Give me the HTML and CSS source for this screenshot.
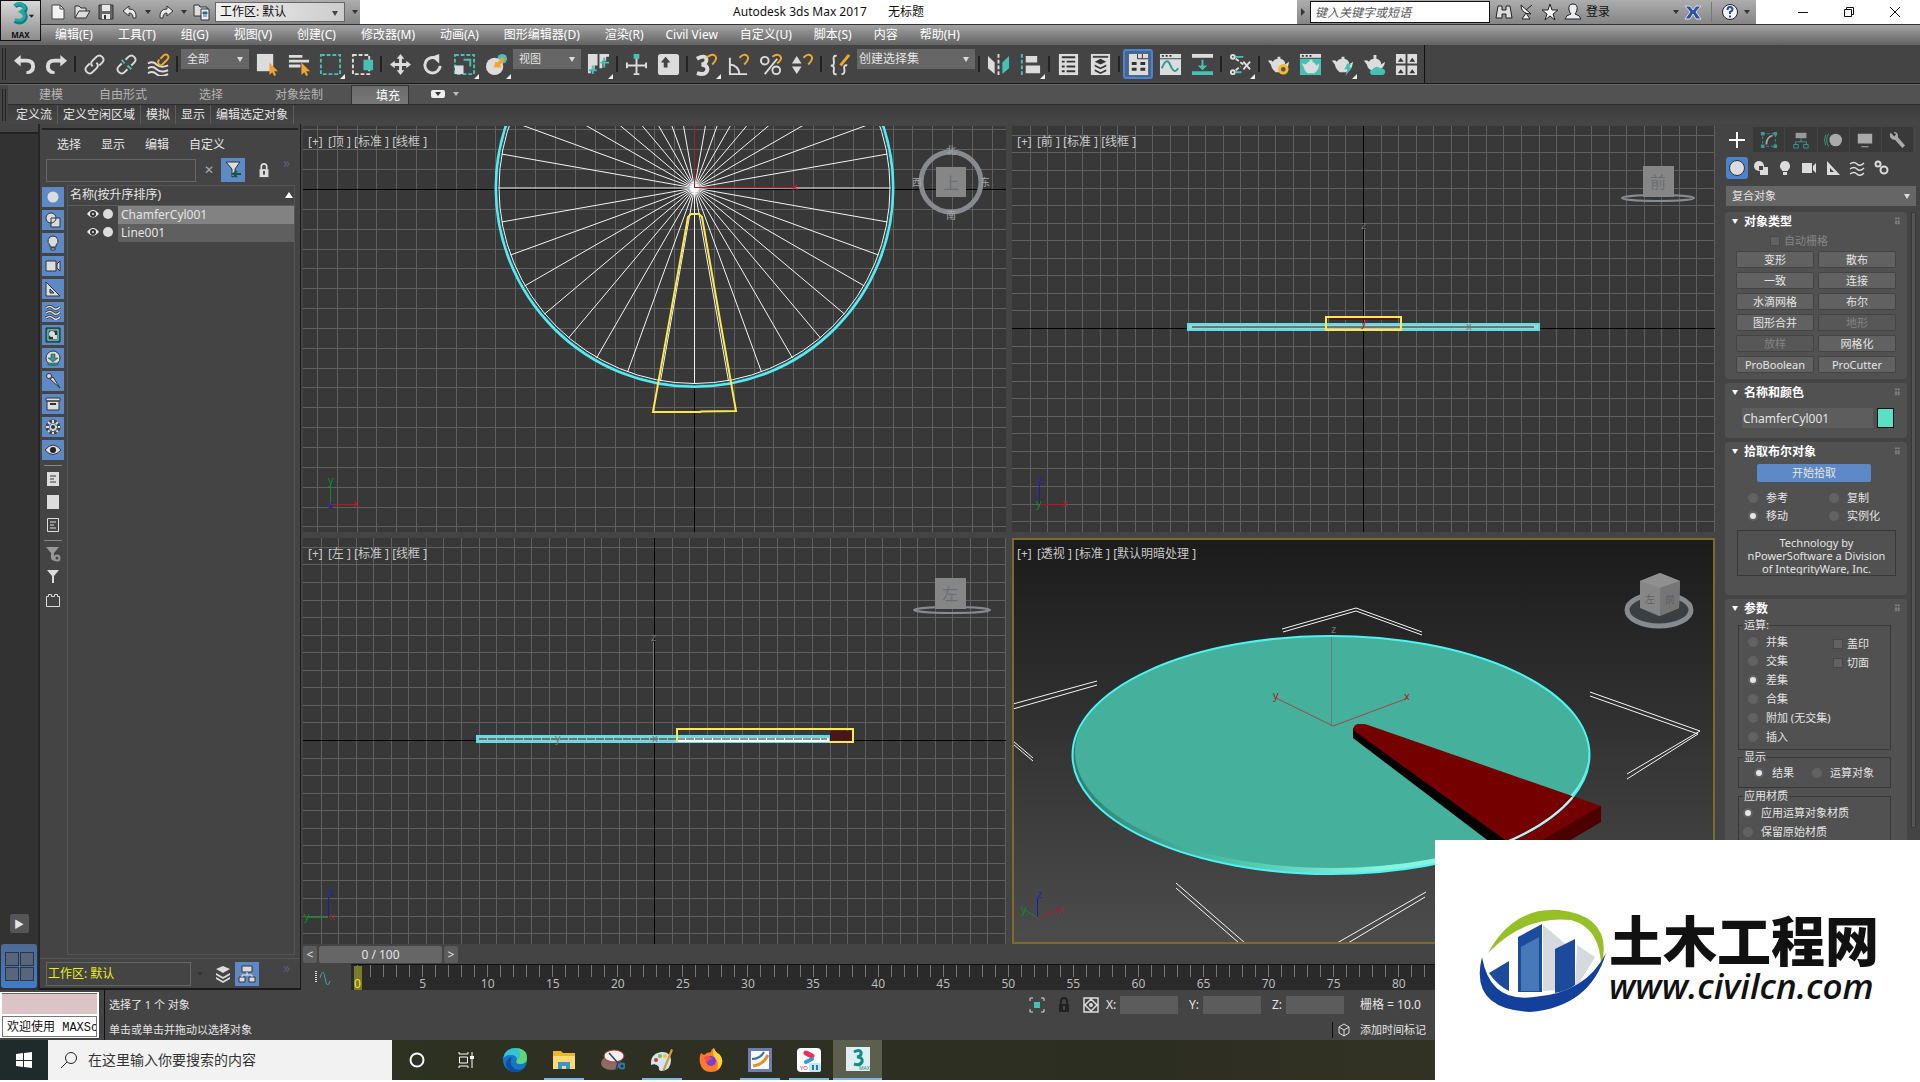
FILE: index.html
```html
<!DOCTYPE html>
<html lang="zh-CN">
<head>
  <meta charset="utf-8">
  <title>Autodesk 3ds Max 2017</title>
  <link rel="stylesheet" href="styles.css">
</head>
<body>

  <!-- Title bar and menus -->
  <header class="top">
    <button class="logo" type="button" aria-label="3ds Max">
      <svg width="38" height="38" viewBox="0 0 38 38">
        <path d="M11 7q6-5 12 0q4 4-1 8q5 4 1 10q-5 5-12 1" fill="none" stroke="#0d7f80" stroke-width="6"/>
        <path d="M11 6q6-5 11 0q4 4-3 8q7 3 3 9q-4 4-11 1" fill="none" stroke="#23a9a5" stroke-width="4"/>
        <path d="M29 18h7l-3 4z" fill="#222"/>
      </svg>
      <b>MAX</b>
    </button>
    <div class="top-rows">
      <div class="titlebar">
        <div class="quick">
          <button type="button" aria-label="新建"><svg class="s18" viewBox="0 0 18 18"><path d="M3 2h8l4 4v10H3z" fill="#f2f2f2" stroke="#444"/><path d="M11 2v4h4" fill="none" stroke="#444"/></svg></button>
          <button type="button" aria-label="打开"><svg class="s18" viewBox="0 0 18 18"><path d="M2 15V3h4l2 2h5v3M2 15l4-7h11l-4 7z" fill="#ddd" stroke="#333"/></svg></button>
          <button type="button" aria-label="保存"><svg class="s18" viewBox="0 0 18 18"><path d="M2 2h14v14H2z" fill="#666" stroke="#333"/><path d="M5 2h8v6H5zM5 11h8v5H5z" fill="#e8e8e8"/><path d="M7 12h2v4H7z" fill="#333"/></svg></button>
          <button type="button" aria-label="撤消"><svg class="s18" viewBox="0 0 18 18"><path d="M2 8l6-5v3q8 0 7 9h-3q0-5-4-5v3z" fill="#e8e8e8" stroke="#333"/></svg></button>
          <i class="down"></i>
          <button type="button" aria-label="重做"><svg class="s18" viewBox="0 0 18 18"><path d="M16 8l-6-5v3q-8 0-7 9h3q0-5 4-5v3z" fill="#e8e8e8" stroke="#333"/></svg></button>
          <i class="down"></i>
          <button type="button" aria-label="项目文件夹"><svg class="s18" viewBox="0 0 18 18"><path d="M1 2h5l1 2h7v9H1z" fill="#ddd" stroke="#333"/><path d="M8 6h8v11H8z" fill="#eee" stroke="#333"/><path d="M10 9h4v2h-4zM10 13h4" stroke="#2a6a9a" fill="#2a6a9a"/></svg></button>
          <span class="pick pick-light"><select aria-label="工作区"><option>工作区: 默认</option></select></span>
          <i class="down down-bar"></i>
        </div>
        <h1 class="title">Autodesk 3ds Max 2017 <span>无标题</span></h1>
        <div class="info">
          <i class="right"></i>
          <input type="text" placeholder="键入关键字或短语" aria-label="搜索">
          <button type="button" aria-label="查找"><svg class="s18" viewBox="0 0 18 18"><path d="M3 3h4v4h4V3h4l2 12h-6v-4H7v4H1z" fill="#ddd" stroke="#222"/></svg></button>
          <button type="button" aria-label="通讯中心"><svg class="s18" viewBox="0 0 18 18"><path d="M3 2q0 9 10 9zM8 10l4 6H4z" fill="#eee" stroke="#222"/><path d="M8 7l6-5" stroke="#222"/></svg></button>
          <button type="button" aria-label="收藏夹"><svg class="s18" viewBox="0 0 18 18"><path d="M9 1l2 6h6l-5 4 2 6-5-4-5 4 2-6-5-4h6z" fill="#f4f4f4" stroke="#222"/></svg></button>
          <button type="button" class="login"><svg class="s18" viewBox="0 0 18 18"><path d="M9 1q5 0 4 6-1 3-2 4 5 1 6 5H1q1-4 6-5-1-1-2-4-1-6 4-6z" fill="#e8eef4" stroke="#222"/></svg>登录</button>
          <i class="down push"></i>
          <button type="button" aria-label="Exchange"><svg class="s18" viewBox="0 0 18 18"><path d="M1 3h5l3 4 3-4h5l-5 6 5 7h-5l-3-5-3 5H1l5-7z" fill="#2d52a0" stroke="#dde"/></svg></button>
          <span class="bar"></span>
          <button type="button" aria-label="帮助"><svg class="s18" viewBox="0 0 18 18"><circle cx="9" cy="9" r="7.500" fill="#f4f6fa" stroke="#222"/><path d="M6.500 7q0-3 2.500-3t2.500 2.500q0 1.500-2.500 2.500v2M9 12.500v2" fill="none" stroke="#1f4fa0" stroke-width="2"/></svg></button>
          <i class="down"></i>
        </div>
        <div class="win">
          <button type="button" aria-label="最小化"><svg width="14" height="14" viewBox="0 0 14 14"><path d="M2 7.500h10"/></svg></button>
          <button type="button" aria-label="还原"><svg width="14" height="14" viewBox="0 0 14 14"><path d="M2.500 4.500h7v7h-7zM4.500 4.500v-2h7v7h-2"/></svg></button>
          <button type="button" aria-label="关闭"><svg width="14" height="14" viewBox="0 0 14 14"><path d="M2 2l10 10M12 2L2 12"/></svg></button>
        </div>
      </div>
      <nav class="menubar">
        <a href="#">编辑(E)</a><a href="#">工具(T)</a><a href="#">组(G)</a><a href="#">视图(V)</a><a href="#">创建(C)</a><a href="#">修改器(M)</a><a href="#">动画(A)</a><a href="#">图形编辑器(D)</a><a href="#">渲染(R)</a><a href="#">Civil View</a><a href="#">自定义(U)</a><a href="#">脚本(S)</a><a href="#">内容</a><a href="#">帮助(H)</a>
      </nav>
    </div>
  </header>

  <!-- Main toolbar -->
  <div class="toolbar">
    <div class="tools">
      <span class="grip"></span>
      <button type="button" aria-label="撤消"><svg viewBox="0 0 24 24"><path d="M1 8l7-6v4h6q9 0 9 8t-9 8v-3q5-1 5-5t-5-4H8v4z"/></svg></button>
      <button type="button" aria-label="重做"><svg viewBox="0 0 24 24"><path d="M23 8l-7-6v4h-6q-9 0-9 8t9 8v-3q-5-1-5-5t5-4h6v4z"/></svg></button>
      <i class="sep"></i>
      <button type="button" aria-label="链接"><svg viewBox="0 0 24 24"><g class="line"><path d="M10 14q-3-3 0-6l4-4q3-3 6 0t0 6l-3 3"/><path d="M14 10q3 3 0 6l-4 4q-3 3-6 0t0-6l3-3"/></g></svg></button>
      <button type="button" aria-label="取消链接"><svg viewBox="0 0 24 24"><g class="line"><path d="M11 7l3-3q3-3 6 0t0 6l-3 3M13 17l-3 3q-3 3-6 0t0-6l3-3"/><path class="tl" d="M7 7l3 4M17 17l-4-4"/></g></svg></button>
      <button type="button" aria-label="绑定到空间扭曲"><svg viewBox="0 0 24 24"><g class="line"><path d="M1 11q5-3 9 1t12 1M1 16q5-3 9 1t12 1M1 21q5-3 9 1t12 0"/><path class="ol" d="M14 6l4-4q3-1 4 1t-1 4l-5 5q-3 2-4-1t1-4"/></g></svg></button>
      <i class="sep"></i>
      <span class="pick pick-s"><select aria-label="选择过滤器"><option>全部</option></select></span>
      <button type="button" aria-label="选择对象"><svg viewBox="0 0 24 24"><path d="M2 1h17v18H2z"/><path class="o" d="M15 10v13l3-3 2 4 2-1-2-4h4z"/></svg></button>
      <button type="button" aria-label="按名称选择"><svg viewBox="0 0 24 24"><path d="M2 2h14v3H2zM2 7h21v3H2zM2 12h12v3H2z"/><path class="o" d="M15 10v13l3-3 2 4 2-1-2-4h4z"/></svg></button>
      <button type="button" class="fly" aria-label="矩形选择区域"><svg viewBox="0 0 24 24"><path class="tl dash" d="M2 2h20v20H2z"/></svg></button>
      <button type="button" aria-label="窗口/交叉"><svg viewBox="0 0 24 24"><path class="wl dash" d="M2 2h17v20H2z"/><path class="t" d="M13 7h10v11H13z"/></svg></button>
      <i class="sep"></i>
      <button type="button" aria-label="选择并移动"><svg viewBox="0 0 24 24"><path d="M12 1l4 5h-2.500v4.500H18V8l5 4-5 4v-2.500h-4.500V18H16l-4 5-4-5h2.500v-4.500H6V16l-5-4 5-4v2.500h4.500V6H8z"/></svg></button>
      <button type="button" aria-label="选择并旋转"><svg viewBox="0 0 24 24"><path class="wl mid" d="M17 6.500a8 8 0 1 0 3 7"/><path d="M11 4l8-3v10z"/></svg></button>
      <button type="button" class="fly" aria-label="选择并缩放"><svg viewBox="0 0 24 24"><path class="tl dash" d="M2 2h20v20H2z"/><path d="M2 13h9v9H2z"/><path class="tl" d="M11 7h7v7M18 7"/></svg></button>
      <button type="button" class="fly" aria-label="选择并放置"><svg viewBox="0 0 24 24"><circle class="t" cx="18" cy="6" r="5"/><circle cx="10" cy="14" r="9"/><path class="o" d="M9 15l2-6 2 1 5-6 3 3-5 5 1 3z"/></svg></button>
      <span class="pick pick-s"><select aria-label="参考坐标系"><option>视图</option></select></span>
      <button type="button" class="fly" aria-label="使用轴点中心"><svg viewBox="0 0 24 24"><path d="M1 1h10v12h-3v4H4v4H1zM13 1h10v3h-3v4h-4v8h-3z"/><path class="tl" d="M6 13v9M2 18h8M18 5v10M14 10h9"/></svg></button>
      <i class="sep"></i>
      <button type="button" aria-label="选择并操纵"><svg viewBox="0 0 24 24"><path class="wl" d="M12 5v18M2 13h20M2 10v6M22 10v6M9 22h6"/><path class="t" d="M9 1h6v5H9z"/></svg></button>
      <button type="button" aria-label="键盘快捷键"><svg viewBox="0 0 24 24"><rect x="1" y="1" width="22" height="22" rx="3"/><path d="M9 4l5 6h-3v5H7v-5H4z" fill="#444"/></svg></button>
      <i class="sep"></i>
      <button type="button" class="fly" aria-label="捕捉开关"><svg viewBox="0 0 24 24"><path class="wl thick" d="M2 6q9-5 10 1 0 4-5 5 6 1 6 5-1 7-11 4"/><path class="ol" d="M12 5q6-5 9-2t-3 9"/></svg></button>
      <button type="button" aria-label="角度捕捉"><svg viewBox="0 0 24 24"><path class="wl" d="M3 5v17h18M3 12q9 1 10 10"/><path class="ol" d="M13 5q5-5 8-2t-3 9"/></svg></button>
      <button type="button" aria-label="百分比捕捉"><svg viewBox="0 0 24 24"><g class="line"><circle cx="6" cy="8" r="4"/><circle cx="18" cy="18" r="4"/><path d="M19 6L6 22"/></g><path class="ol" d="M14 4q5-4 8-1t-3 8"/></svg></button>
      <button type="button" aria-label="微调器捕捉"><svg viewBox="0 0 24 24"><path d="M1 11l5-8 5 8zM1 14h10l-5 8z"/><path class="ol" d="M13 5q5-5 8-2t-3 9"/></svg></button>
      <i class="sep"></i>
      <button type="button" aria-label="编辑命名选择集"><svg viewBox="0 0 24 24"><path class="wl" d="M8 3Q4 2 5 8t-3 5q4 0 3 5t3 4M13 22q4 0 3-5t3-4"/><path class="ol mid" d="M12 13l9-11"/></svg></button>
      <span class="pick pick-l"><select aria-label="命名选择集"><option>创建选择集</option></select></span>
      <i class="sep"></i>
      <button type="button" aria-label="镜像"><svg viewBox="0 0 24 24"><path d="M1 3l7 7v12l-7-6z"/><path class="t" d="M23 3l-7 7v12l7-6z"/><path class="wl dash" d="M12 1v22"/></svg></button>
      <button type="button" class="fly" aria-label="对齐"><svg viewBox="0 0 24 24"><path class="tl dash" d="M3 1v22"/><path d="M7 3h12v7H7zM7 13h15v8H7z"/></svg></button>
      <i class="sep"></i>
      <button type="button" aria-label="层资源管理器"><svg viewBox="0 0 24 24"><path d="M2 1h20v22H2z"/><path d="M5 4.500h14M5 9h3M10 9h9M5 14h3M10 14h9M5 19h3M10 19h9" stroke="#333" stroke-width="2"/></svg></button>
      <button type="button" aria-label="场景资源管理器"><svg viewBox="0 0 24 24"><path d="M2 1h20v22H2z"/><path d="M4 4h16" stroke="#444" stroke-width="2"/><path d="M12 6l6 3-6 3-6-3zM6 12l6 3 6-3v2l-6 3-6-3zM6 17l6 3 6-3v2l-6 3-6-3z" fill="#333"/></svg></button>
      <i class="sep"></i>
      <button type="button" class="on" aria-label="切换功能区"><svg viewBox="0 0 24 24"><path d="M2 1h20v22H2z"/><path d="M11 1v5h11M16 1v5" fill="none" stroke="#333"/><path d="M5 11h5M5 17h5M14 11h5M14 17h5" stroke="#333" stroke-width="3"/></svg></button>
      <button type="button" aria-label="曲线编辑器"><svg viewBox="0 0 24 24"><path d="M1 1h22v22H1z"/><path d="M3 3h2M7 3h2M11 3h2" stroke="#333" stroke-width="2"/><path d="M1 6h22" stroke="#444"/><path d="M3 16q5-13 9-3t8 3" fill="none" stroke="#2a9c93" stroke-width="2"/></svg></button>
      <button type="button" aria-label="图解视图"><svg viewBox="0 0 24 24"><path d="M1 1h22v4H1z"/><path class="t" d="M11 7h2v6h4l-5 5-5-5h4zM1 19h22v4H1z"/></svg></button>
      <i class="sep"></i>
      <button type="button" class="fly" aria-label="材质编辑器"><svg viewBox="0 0 24 24"><path class="tl" d="M7 4h8M7 20h6"/><g class="line"><circle cx="4" cy="4" r="2"/><circle cx="4" cy="20" r="2"/></g><path class="wl dash" d="M7 6l8 6M7 18l5-4"/><path class="wl" d="M15 9l7 8M22 9l-7 8"/></svg></button>
      <i class="sep"></i>
      <button type="button" aria-label="渲染设置"><svg viewBox="0 0 24 24"><path d="M1 8q3-1 5 1 2-3 5-3V4h3v2q5 1 5 6l4-3q-1 9-7 11H9Q5 17 4 12z"/><circle cx="17" cy="17" r="4" fill="#555" stroke="#f5b82e" stroke-width="3"/></svg></button>
      <button type="button" aria-label="渲染帧窗口"><svg viewBox="0 0 24 24"><path d="M1 1h22v4H1z"/><path class="t" d="M1 6h22v17H1z"/><path d="M3 3h2M7 3h2M11 3h2" stroke="#333" stroke-width="2"/><path d="M3 11q2 0 4 1 2-3 4-3V7h3v2q3 1 4 4l3-2q0 7-5 10H9q-3-2-4-6z"/></svg></button>
      <button type="button" class="fly" aria-label="渲染产品"><svg viewBox="0 0 24 24"><path d="M1 8q3-1 5 1 2-3 5-3V4h3v2q5 1 5 6l4-3q-1 9-7 11H9Q5 17 4 12z"/><path class="t" d="M17 11l-3 6h3l-2 7 7-9h-3l2-4z"/></svg></button>
      <button type="button" aria-label="云渲染"><svg viewBox="0 0 24 24"><path d="M1 8q3-1 5 1 2-3 5-3V2h3v4q5 1 5 6l4-3q-1 7-7 9H9Q5 17 4 12z"/><path class="t" d="M9 23q-4-4 1-6 4-5 8-1 6 0 5 5l-2 2z"/></svg></button>
      <button type="button" aria-label="Autodesk A360 库"><svg viewBox="0 0 24 24"><path d="M1 1h10v10H1zM13 1h10v10H13zM1 13h10v10H1zM13 13h10v10H13z"/><path d="M3 9l3-4 3 4zM15 9l3-4 3 4zM3 21l3-4 3 4zM15 21l3-4 3 4z" fill="#333"/></svg></button>
    </div>
  </div>

  <!-- Ribbon -->
  <div class="ribbon">
    <span class="grip"></span>
    <div class="ribbon-rows">
      <div class="tabs">
        <button type="button" class="tab tight">建模</button>
        <button type="button" class="tab">自由形式</button>
        <button type="button" class="tab">选择</button>
        <button type="button" class="tab">对象绘制</button>
        <button type="button" class="tab tight active">填充</button>
        <button type="button" class="mini" aria-label="最小化功能区"><i class="down"></i></button>
        <i class="down"></i>
      </div>
      <div class="panels">
        <button type="button">定义流</button>
        <button type="button">定义空闲区域</button>
        <button type="button">模拟</button>
        <button type="button">显示</button>
        <button type="button">编辑选定对象</button>
      </div>
    </div>
  </div>

  <main class="work">
    <aside class="strip">
      <span class="strip-grip"></span>
      <button type="button" class="play" aria-label="展开">▶</button>
      <button type="button" class="layout" aria-label="视口布局"><i></i><i></i><i></i><i></i></button>
    </aside>

    <!-- Scene explorer -->
    <section class="explorer">
      <nav class="ex-menu"><a href="#">选择</a><a href="#">显示</a><a href="#">编辑</a><a href="#">自定义</a></nav>
      <div class="ex-search">
        <input type="text" aria-label="查找">
        <button type="button" class="clear" aria-label="清除">✕</button>
        <button type="button" class="blue" aria-label="过滤"><svg class="s18" viewBox="0 0 18 18"><path d="M2 1h14l-5 7v7l-3 1V8z" fill="#ddd" stroke="#333"/><path d="M10 13h7M13 10l-4 3 4 3" fill="none" stroke="#154" stroke-width="2"/></svg></button>
        <button type="button" class="lock" aria-label="锁定"><svg class="s16" viewBox="0 0 18 18"><path d="M6 8V5q0-3 3-3t3 3v3" fill="none" stroke="#ddd" stroke-width="2"/><path d="M4 8h10v9H4z" fill="#ddd"/><path d="M9 10v4" stroke="#333" stroke-width="2"/></svg></button>
        <span class="more">»</span>
      </div>
      <div class="ex-body">
        <div class="ex-icons">
          <button type="button" class="blue" aria-label="几何体"><svg class="s16" viewBox="0 0 16 16"><circle cx="8" cy="8" r="5.500"/></svg></button>
          <button type="button" class="blue" aria-label="图形"><svg class="s16" viewBox="0 0 16 16"><circle cx="6" cy="6" r="5" stroke="#333"/><path d="M6 6h9v9H6z" stroke="#333"/><path d="M6 11a5 5 0 0 0 5-5" fill="none" stroke="#333"/></svg></button>
          <button type="button" class="blue" aria-label="灯光"><svg class="s16" viewBox="0 0 16 16"><path d="M8 1a5 5 0 0 1 3 9v2H5v-2a5 5 0 0 1 3-9zM6 13h4v2H6z" stroke="#333"/></svg></button>
          <button type="button" class="blue" aria-label="摄影机"><svg class="s16" viewBox="0 0 16 16"><path d="M1 3h10v10H1zM12 6l3-3v10l-3-3z" stroke="#333"/></svg></button>
          <button type="button" class="blue" aria-label="辅助对象"><svg class="s16" viewBox="0 0 16 16"><path d="M1 1l14 14H1zM5 8v4h4z" fill-rule="evenodd" stroke="#333"/></svg></button>
          <button type="button" class="blue" aria-label="空间扭曲"><svg class="s16" viewBox="0 0 16 16"><path d="M1 4q4-3 7 0t7-1M1 9q4-3 7 0t7-1M1 14q4-3 7 0t7-1" fill="none" stroke="#333" stroke-width="3"/><path d="M1 4q4-3 7 0t7-1M1 9q4-3 7 0t7-1M1 14q4-3 7 0t7-1" fill="none" stroke="#ddd" stroke-width="1.500"/></svg></button>
          <button type="button" class="blue" aria-label="组"><svg class="s16" viewBox="0 0 16 16"><path d="M1 1h14v14H1z" fill="#2c7d74" stroke="#222"/><path d="M3 3h10v10H3z" fill="#333" stroke="#7fe0d0"/><circle cx="7" cy="7" r="3"/><path d="M8 8h4v4H8z"/></svg></button>
          <button type="button" class="blue" aria-label="外部参考"><svg class="s16" viewBox="0 0 16 16"><circle cx="8" cy="8" r="7" stroke="#333"/><path d="M6 4h4v4h3l-5 4-5-4h3zM3 13h10v2H3z" fill="#2c9c8c" stroke="#333" stroke-width=".5"/></svg></button>
          <button type="button" class="blue" aria-label="骨骼"><svg class="s16" viewBox="0 0 16 16"><path d="M5 6l3-2 7 11z" stroke="#333"/><circle cx="4" cy="3" r="2.500" stroke="#333"/></svg></button>
          <button type="button" class="blue" aria-label="容器"><svg class="s16" viewBox="0 0 16 16"><path d="M1 2h14v3H1zM2 5h12v9H2z" stroke="#333"/><path d="M5 8h6" stroke="#333" stroke-width="2"/></svg></button>
          <button type="button" class="blue" aria-label="冻结"><svg class="s16" viewBox="0 0 16 16"><circle cx="8" cy="8" r="6" fill="none" stroke="#444" stroke-width="3"/><path d="M8 1v14M1 8h14M3 3l10 10M13 3L3 13" stroke="#ddd" stroke-width="2" stroke-dasharray="3 1"/><circle cx="8" cy="8" r="2" fill="#333"/></svg></button>
          <button type="button" class="blue" aria-label="隐藏"><svg class="s16" viewBox="0 0 16 16"><path d="M0 8q8-10 16 0-8 9-16 0z" stroke="#333"/><circle cx="8" cy="8" r="3" fill="#222"/></svg></button>
          <hr>
          <button type="button" aria-label="全部显示"><svg class="s16" viewBox="0 0 16 16"><path d="M2 1h12v14H2z"/><path d="M5 5h6M5 8h4M5 11h6" stroke="#333"/></svg></button>
          <button type="button" aria-label="不显示"><svg class="s16" viewBox="0 0 16 16"><path d="M2 1h12v14H2z"/></svg></button>
          <button type="button" aria-label="反转显示"><svg class="s16" viewBox="0 0 16 16"><path d="M2.500 1.500h11v13h-11zM5 5h6M5 8h4M5 11h6" fill="none" stroke="#ddd"/></svg></button>
          <hr>
          <button type="button" aria-label="过滤设置"><svg class="s16" viewBox="0 0 16 16"><path d="M1 1h13L9 7v8l-3-2V7z" fill="#999"/><circle cx="12" cy="12" r="2.500" fill="none" stroke="#999" stroke-width="2"/></svg></button>
          <button type="button" aria-label="过滤器"><svg class="s16" viewBox="0 0 16 16"><path d="M2 1h12L9 7v7H7V7z"/></svg></button>
          <button type="button" aria-label="容器"><svg class="s16" viewBox="0 0 16 16"><path d="M1.500 4.500h2v-2h3v2h3v-2h3v2h2v10h-13z" fill="none" stroke="#ddd"/></svg></button>
        </div>
        <div class="ex-list">
          <div class="ex-head"><span>名称(按升序排序)</span><i class="up"></i></div>
          <div class="ex-row sel">
            <svg width="36" height="16" viewBox="0 0 36 16"><path d="M1 8q6-8 12 0-6 7-12 0z" fill="#eee"/><circle cx="7" cy="8" r="3" fill="#333"/><circle cx="7" cy="8" r="1" fill="#eee"/><circle cx="22" cy="8" r="5" fill="#ddd"/></svg><span>ChamferCyl001</span>
          </div>
          <div class="ex-row">
            <svg width="36" height="16" viewBox="0 0 36 16"><path d="M1 8q6-8 12 0-6 7-12 0z" fill="#eee"/><circle cx="7" cy="8" r="3" fill="#333"/><circle cx="7" cy="8" r="1" fill="#eee"/><circle cx="22" cy="8" r="5" fill="#ddd"/></svg><span>Line001</span>
          </div>
        </div>
      </div>
      <div class="ex-foot">
        <select aria-label="工作区"><option>工作区: 默认</option></select>
        <i class="down"></i>
        <button type="button" aria-label="按层"><svg class="s18" viewBox="0 0 18 18"><path d="M9 1l7 3-7 4-7-4zM2 8l7 4 7-4v2l-7 4-7-4zM2 12l7 4 7-4v2l-7 4-7-4z"/></svg></button>
        <button type="button" class="blue" aria-label="按层次"><svg class="s18" viewBox="0 0 18 18"><path d="M4 1h10v6H4zM1 12h6v5H1zM11 12h6v5h-6z" stroke="#333"/><path d="M9 7v3M4 12v-2h10v2" fill="none" stroke="#eee"/></svg></button>
        <span class="more">»</span>
      </div>
    </section>

    <!-- Viewports -->
    <section class="center">
      <div class="views">
        <div class="view">
          <svg class="scene" viewBox="0 0 703 406" preserveAspectRatio="xMidYMid slice">
            <path class="grid" data-step="19.85" data-x="391" data-y="63"/>
            <path class="axis" d="M0 63.500h703M391.500 0v406"/>
            <g transform="translate(391.5 62)">
              <path class="wire" d="M-196 0H196M-193-34L193 34M-184-67L184 67M-170-98L170 98M-150-126L150 126M-126-150L126 150M-98-170L98 170M-67-184L67 184M-34-193L34 193M0-196V196M34-193L-34 193M67-184L-67 184M98-170L-98 170M126-150L-126 150M150-126L-150 126M170-98L-170 98M184-67L-184 67M193-34L-193 34"/>
              <circle r="195.500" class="wire"/>
              <circle r="198.500" fill="none" stroke="#55eaf2" stroke-width="3"/>
              <circle r="197" fill="none" stroke="#2d5558"/>
              <circle r="4" fill="#fff"/>
            </g>
            <path d="M391.500 62V0M391.500 61.500h100" stroke="#b01c24"/>
            <text class="ax r" x="489" y="64">x</text>
            <path class="yellow" d="M350 286l35-195 3-3h8l3 3 34 194-35 .5-.5.5z"/>
            <g class="cube">
              <circle cx="648" cy="56" r="30" fill="none" stroke="#868b90" stroke-width="5"/>
              <path d="M633 41h30v30h-30z"/>
              <text x="648" y="63" class="face">上</text>
              <text x="648" y="28">北</text><text x="648" y="93">南</text><text x="614" y="60">西</text><text x="682" y="60">东</text>
            </g>
            <path d="M27.500 378v-20" stroke="#0a8a2a"/><path d="M27 378.500h27" stroke="#b01c24"/>
            <text class="ax g" x="25" y="358">y</text><text class="ax b" x="25" y="382">z</text><text class="ax r" x="50" y="381">x</text>
          </svg>
          <p><span>[+]</span> [顶 ] [标准 ] [线框 ]</p>
        </div>
        <div class="view">
          <svg class="scene" viewBox="0 0 703 406" preserveAspectRatio="xMidYMid slice">
            <path class="grid" data-step="17.55" data-x="351" data-y="202"/>
            <path class="axis" d="M0 202.500h703M351.500 0v406"/>
            <path d="M352.500 104v96" stroke="#777"/>
            <path d="M176 198h351v6H176z" fill="#b9c9c9" stroke="#4ee6ec" stroke-width="2"/>
            <path d="M180 201h342" stroke="#222"/>
            <path class="yellow" d="M314 191h75v13h-75z"/>
            <path d="M318 193h67" stroke="#5a1414" stroke-width="2"/>
            <text class="ax" x="349" y="103">z</text><text class="ax r" x="349" y="200">y</text><text class="ax" x="454" y="204">x</text>
            <g class="cube">
              <ellipse cx="646" cy="72" rx="36" ry="3" fill="none" stroke="#868b90" stroke-width="2"/>
              <path d="M631 40h31v31h-31z"/><text x="646" y="62" class="face">前</text>
            </g>
            <path d="M27.500 378v-20" stroke="#1a1ac0"/><path d="M27 378.500h27" stroke="#b01c24"/>
            <text class="ax b" x="25" y="358">z</text><text class="ax g" x="24" y="381">y</text><text class="ax r" x="50" y="381">x</text>
          </svg>
          <p><span>[+]</span> [前 ] [标准 ] [线框 ]</p>
        </div>
        <div class="view">
          <svg class="scene" viewBox="0 0 703 406" preserveAspectRatio="xMidYMid slice">
            <path class="grid" data-step="17.55" data-x="351" data-y="202"/>
            <path class="axis" d="M0 202.500h703M351.500 0v406"/>
            <path d="M350.500 104v96" stroke="#777"/>
            <path d="M527 193h22v10h-22z" fill="#4a1616"/>
            <path d="M174 198h352v6H174z" fill="#a5c5c5" stroke="#4ee6ec" stroke-width="2"/>
            <path d="M374 200h152v4H374z" fill="#fff"/>
            <path d="M176 201h348" stroke="#222" stroke-dasharray="8 1"/>
            <path class="yellow" d="M526 204h24v-13H374v13"/>
            <text class="ax" x="348" y="103">z</text><text class="ax" x="252" y="204">y</text><text class="ax" x="349" y="204">x</text>
            <g class="cube">
              <ellipse cx="649" cy="72" rx="38" ry="3" fill="none" stroke="#868b90" stroke-width="2"/>
              <path d="M632 40h31v31h-31z"/><text x="647" y="62" class="face">左</text>
            </g>
            <path d="M25.500 379v-20" stroke="#1a1ac0"/><path d="M4 379.500h21" stroke="#0a8a2a"/>
            <text class="ax b" x="25" y="358">z</text><text class="ax g" x="1" y="382">y</text><text class="ax r" x="26" y="382">x</text>
          </svg>
          <p><span>[+]</span> [左 ] [标准 ] [线框 ]</p>
        </div>
        <div class="view persp">
          <svg class="scene" viewBox="0 0 703 406" preserveAspectRatio="xMidYMid slice">
            <defs>
              <linearGradient id="rim"><stop offset="0" stop-color="#2f7f70"/><stop offset=".3" stop-color="#4cc0aa"/><stop offset=".6" stop-color="#86f5e0"/></linearGradient>
            </defs>
            <path class="wire" d="M270 91l74-21 66 24M271 94l73-21 66 24M1 166l84-23M1 171l84-24M1 203l20 17M1 206l20 17M578 154l110 39-73 43M578 158l108 38-71 45M164 345l69 60M164 350l63 55M414 354l-89 51M413 359l-77 46"/>
            <ellipse cx="319" cy="217" rx="258" ry="119" fill="url(#rim)"/>
            <ellipse cx="320" cy="214" rx="257" ry="116" fill="#45b09c"/>
            <path d="M319.500 98v90" stroke="#5f7f78"/>
            <path d="M264 160l57 28 75-28" fill="none" stroke="#a04840"/>
            <text class="ax r" x="261" y="161">y</text><text class="ax r" x="392" y="162">x</text><text class="ax" x="319" y="95">z</text>
            <path d="M341 190v10l150 114h36z" fill="#050000"/>
            <path d="M341 192q1-6 5-6h7l236 82-64 44h-18z" fill="#740000"/>
            <path d="M589 268v16l-56 33-20-5z" fill="#4c0000"/>
            <ellipse cx="319" cy="217" rx="258.500" ry="119" fill="none" stroke="#4df3f3" stroke-width="2"/>
            <path d="M560 260A258.500 119 0 0 1 487 307" fill="none" stroke="#b5f3f5" stroke-width="2"/>
            <g class="cube">
              <ellipse cx="647" cy="72" rx="32" ry="16" fill="#3c3f42" stroke="#868b90" stroke-width="5"/>
              <path d="M648 35l20 8-1 27-20 8-19-8V43z"/>
              <path d="M648 35l20 8-20 7-20-7z" fill="#8f8f8f"/>
              <path d="M648 50v28l19-8 1-27z" fill="#757575"/>
              <text x="638" y="65">左</text><text x="658" y="65">前</text>
            </g>
            <path d="M25.500 380v-20" stroke="#1a1ac0"/><path d="M26 380l24-9" stroke="#b01c24"/><path d="M26 380l-13-8" stroke="#0a8a2a"/>
            <text class="ax b" x="25" y="360">z</text><text class="ax g" x="9" y="375">y</text><text class="ax r" x="46" y="375">x</text>
          </svg>
          <p><span>[+]</span> [透视 ] [标准 ] [默认明暗处理 ]</p>
        </div>
      </div>
      <div class="slider">
        <button type="button">&lt;</button>
        <button type="button" class="frame">0 / 100</button>
        <button type="button">&gt;</button>
      </div>
      <div class="track">
        <button type="button" aria-label="打开迷你曲线编辑器"><svg width="18" height="16" viewBox="0 0 18 16"><path d="M2 2v12" stroke="#ddd" stroke-width="2" stroke-dasharray="1 1"/><path d="M6 9q3-12 5 0t5 3" fill="none" stroke="#3aa9a0"/></svg></button>
        <div class="ruler" id="ruler"></div>
      </div>
    </section>

    <!-- Command panel -->
    <aside class="command">
      <div class="cmd-tabs">
        <button type="button" class="active" aria-label="创建"><svg class="s20" viewBox="0 0 20 20"><path d="M9 2h2v7h7v2h-7v7H9v-7H2V9h7z" fill="#fff"/></svg></button>
        <button type="button" aria-label="修改"><svg class="s18" viewBox="0 0 20 20"><path d="M3 3h14v14H3z" fill="none" stroke="#3a9a90" stroke-dasharray="3 2"/><path d="M1 1h4v4H1zM15 1h4v4h-4zM1 15h4v4H1zM15 15h4v4h-4z" fill="#3a9a90"/><path d="M7 15q0-8 7-10" fill="none" stroke="#aaa" stroke-width="2"/></svg></button>
        <button type="button" aria-label="层次"><svg class="s18" viewBox="0 0 20 20"><path d="M4 2h12v6H4z" fill="#999"/><path d="M10 8v4M4 15v-3h12v3M2 15h5v4H2zM13 15h5v4h-5z" fill="none" stroke="#3a9a90"/></svg></button>
        <button type="button" aria-label="运动"><svg class="s18" viewBox="0 0 20 20"><path d="M5 3q-4 7 0 14M2 4q-3 6 0 12" fill="none" stroke="#3a9a90"/><circle cx="13" cy="10" r="7" fill="#aaa"/></svg></button>
        <button type="button" aria-label="显示"><svg class="s18" viewBox="0 0 20 20"><path d="M2 3h16v11H2zM6 17h8v1H6z" fill="#aaa"/></svg></button>
        <button type="button" aria-label="实用程序"><svg class="s18" viewBox="0 0 20 20"><path d="M3 2l4 4 2-2-3-3q6 0 5 6l8 9-3 3-8-9q-6 0-6-6z" fill="#aaa"/></svg></button>
      </div>
      <div class="cats">
        <button type="button" class="on" aria-label="几何体"><svg class="s18" viewBox="0 0 18 18"><circle cx="9" cy="9" r="7.500" stroke="#333"/></svg></button>
        <button type="button" aria-label="图形"><svg class="s16" viewBox="0 0 16 16"><circle cx="6" cy="6" r="5"/><path d="M7 7h8v8H7z"/><path d="M6 6h4v4H6z" fill="#444"/></svg></button>
        <button type="button" aria-label="灯光"><svg class="s16" viewBox="0 0 16 16"><path d="M8 1a5 5 0 0 1 3 9v1H5v-1a5 5 0 0 1 3-9zM6 12h4v3H6z"/></svg></button>
        <button type="button" aria-label="摄影机"><svg class="s16" viewBox="0 0 16 16"><path d="M1 3h10v10H1zM12 6l3-3v10l-3-3z"/></svg></button>
        <button type="button" aria-label="辅助对象"><svg class="s16" viewBox="0 0 16 16"><path d="M2 1l13 14H2zM5 8v4h4z" fill-rule="evenodd"/></svg></button>
        <button type="button" aria-label="空间扭曲"><svg class="s16" viewBox="0 0 16 16"><path d="M1 4q4-3 7 0t7-1M1 9q4-3 7 0t7-1M1 14q4-3 7 0t7-1" fill="none" stroke="#ddd" stroke-width="1.500"/></svg></button>
        <button type="button" aria-label="系统"><svg class="s16" viewBox="0 0 16 16"><g fill="none" stroke="#ddd" stroke-width="2"><circle cx="5" cy="4" r="2.500"/><circle cx="11" cy="10" r="3.500"/></g></svg></button>
      </div>
      <span class="pick pick-cmd"><select aria-label="对象类别"><option>复合对象</option></select></span>
      <div class="scroll">
        <div class="rolls">
          <section class="roll">
            <h2>对象类型</h2>
            <label class="autogrid"><input type="checkbox" disabled>自动栅格</label>
            <div class="types">
              <button type="button">变形</button><button type="button">散布</button>
              <button type="button">一致</button><button type="button">连接</button>
              <button type="button">水滴网格</button><button type="button">布尔</button>
              <button type="button">图形合并</button><button type="button" disabled>地形</button>
              <button type="button" disabled>放样</button><button type="button">网格化</button>
              <button type="button">ProBoolean</button><button type="button">ProCutter</button>
            </div>
          </section>
          <section class="roll">
            <h2>名称和颜色</h2>
            <div class="namecolor">
              <input type="text" value="ChamferCyl001" aria-label="名称">
              <button type="button" class="swatch" aria-label="颜色"></button>
            </div>
          </section>
          <section class="roll pickroll">
            <h2>拾取布尔对象</h2>
            <button type="button" class="start">开始拾取</button>
            <div class="modes">
              <label><input type="radio" name="mode">参考</label><label><input type="radio" name="mode">复制</label>
              <label><input type="radio" name="mode" checked>移动</label><label><input type="radio" name="mode">实例化</label>
            </div>
            <div class="credit">Technology by<br>nPowerSoftware a Division<br>of IntegrityWare, Inc.</div>
          </section>
          <section class="roll params">
            <h2>参数</h2>
            <fieldset class="ops">
              <legend>运算:</legend>
              <div>
                <label><input type="radio" name="op">并集</label>
                <label><input type="radio" name="op">交集</label>
                <label><input type="radio" name="op" checked>差集</label>
                <label><input type="radio" name="op">合集</label>
                <label><input type="radio" name="op">附加 (无交集)</label>
                <label><input type="radio" name="op">插入</label>
              </div>
              <div class="checks">
                <label><input type="checkbox">盖印</label>
                <label><input type="checkbox">切面</label>
              </div>
            </fieldset>
            <fieldset class="show">
              <legend>显示</legend>
              <label><input type="radio" name="show" checked>结果</label>
              <label><input type="radio" name="show">运算对象</label>
            </fieldset>
            <fieldset class="mat">
              <legend>应用材质</legend>
              <label><input type="radio" name="mat" checked>应用运算对象材质</label>
              <label><input type="radio" name="mat">保留原始材质</label>
            </fieldset>
          </section>
        </div>
        <span class="bar-v"></span>
      </div>
    </aside>
  </main>

  <!-- Status bar -->
  <div class="status">
    <div class="listener"><span></span><input type="text" value="欢迎使用 MAXScript" aria-label="MAXScript 侦听器"></div>
    <div class="msg"><p>选择了 1 个 对象</p><p>单击或单击并拖动以选择对象</p></div>
    <div class="coords">
      <div class="xyz">
        <svg class="s16" viewBox="0 0 16 16"><path d="M1 4V1h3M12 1h3v3M15 12v3h-3M4 15H1v-3" fill="none" stroke="#ddd"/><path d="M5 5h6v6H5z" fill="#45c0b5"/></svg>
        <svg class="s16" viewBox="0 0 16 16"><path d="M5 7V4q0-3 3-3t3 3v3" fill="none" stroke="#222" stroke-width="2"/><path d="M3 7h10v8H3z" fill="#222"/><path d="M8 9v4" stroke="#777"/></svg>
        <svg class="s16" viewBox="0 0 16 16"><path d="M1 1h14v14H1zM8 2l6 6-6 6-6-6z" fill="none" stroke="#ddd" stroke-width="1.500"/><circle cx="8" cy="8" r="2"/></svg>
        <label>X:<input type="text"></label>
        <label>Y:<input type="text"></label>
        <label>Z:<input type="text"></label>
        <span class="gridsize">栅格 = 10.0</span>
      </div>
      <div class="tag"><svg class="s16" viewBox="0 0 16 16"><path d="M8 2l5 3v6l-5 3-5-3V5zM3 5l5 3 5-3M8 8v6" fill="none" stroke="#ddd"/></svg><span>添加时间标记</span></div>
    </div>
  </div>

  <!-- Windows taskbar -->
  <footer class="taskbar">
    <button type="button" class="start-btn" aria-label="开始"><svg class="s16" viewBox="0 0 16 16"><path d="M0 2l7-1v7H0zM8 1l8-1v8H8zM0 9h7v6l-7-1zM8 9h8v7l-8-1z" fill="#fff"/></svg></button>
    <label class="search"><svg class="s18" viewBox="0 0 18 18"><circle cx="11" cy="7" r="5.500" fill="none" stroke="#222"/><path d="M7 11l-6 6" stroke="#222"/></svg><input type="text" placeholder="在这里输入你要搜索的内容"></label>
    <button type="button" aria-label="Cortana"><svg class="s24" viewBox="0 0 24 24"><circle cx="12" cy="12" r="6.500" fill="none" stroke="#fff" stroke-width="2"/></svg></button>
    <button type="button" aria-label="任务视图"><svg class="s24" viewBox="0 0 24 24"><path d="M5 4v2h9V4M5 20v-2h9v2M5.500 9h8v6h-8zM18 4v16" fill="none" stroke="#fff"/><path d="M16 8h4v3h-4z" fill="#fff"/></svg></button>
    <button type="button" aria-label="Edge"><svg class="s24" viewBox="0 0 24 24"><circle cx="12" cy="12" r="12" fill="#1676c4"/><path d="M0 11Q2 0 13 0q11 1 11 10 0 6-8 6-4-1-2-4 0-5-6-5-6 0-8 4z" fill="#35c3d0"/><path d="M15 0q9 2 9 10 0 6-8 6-4-1-2-4 6-4 1-12z" fill="#5fd675"/><path d="M9 9q-4 7 3 12 5 2 9-1-5 5-11 4Q2 21 3 14q2-4 6-5z" fill="#0f4fa0"/></svg></button>
    <button type="button" class="run" aria-label="文件资源管理器"><svg class="s24" viewBox="0 0 24 24"><path d="M1 3h8l2 2h12v16H1z" fill="#f0b429"/><path d="M1 8h22v13H1z" fill="#fddb72"/><path d="M6 21v-7h12v7h-4v-3h-4v3z" fill="#3b92d0"/></svg></button>
    <button type="button" aria-label="截图工具"><svg class="s24" viewBox="0 0 24 24"><ellipse cx="10" cy="15" rx="10" ry="7" fill="#8d6a63"/><ellipse cx="13" cy="8" rx="10" ry="6" fill="#f5f0f0" stroke="#b33"/><path d="M8 5l9 10M17 14l6 3M17 14l-2 8" stroke="#246" stroke-width="1.500"/><circle cx="21" cy="18" r="2.500" fill="none" stroke="#2a7ba0" stroke-width="2"/></svg></button>
    <button type="button" class="run" aria-label="画图"><svg class="s24" viewBox="0 0 24 24"><path d="M1 17Q0 6 11 4q9-1 10 8 0 10-9 11-4 0-3-4-3-4-8-2z" fill="#cfe6f5"/><circle cx="6" cy="12" r="2" fill="#d33"/><circle cx="10" cy="8" r="2" fill="#8b3"/><circle cx="15" cy="8" r="2" fill="#fb3"/><path d="M21 1l2 1-8 20-3 1z" fill="#d99a3c"/></svg></button>
    <button type="button" aria-label="Firefox"><svg class="s24" viewBox="0 0 24 24"><path d="M2 5l3 2q3-3 7-3 0-3 3-4 1 4 5 6 4 4 3 9-2 9-11 9T1 15Q0 9 2 5z" fill="#ff7a2a"/><path d="M15 0q1 4 5 6 4 4 3 9-1 5-5 7 3-8-3-13-2-5 0-9z" fill="#ffd03a"/><circle cx="12" cy="13" r="5" fill="#7a3fd0"/><path d="M5 9q5-2 8 2-4 0-4 3-3-1-4-5z" fill="#ff4a4a"/></svg></button>
    <button type="button" class="run" aria-label="看图"><svg class="s24" viewBox="0 0 24 24"><path d="M0 0h24v24H0z" fill="#6c7db5"/><path d="M3 3h18v18H3z" fill="#fafafa"/><path d="M4 11q8 0 12-7" fill="none" stroke="#356fa8" stroke-width="2"/><path d="M5 18q10-1 15-11" fill="none" stroke="#e0902a" stroke-width="3"/></svg></button>
    <button type="button" class="run" aria-label="有道"><svg class="s24" viewBox="0 0 24 24"><rect width="24" height="24" rx="4" fill="#fff"/><path d="M9 5l6 3" stroke="#e8315b" stroke-width="5" stroke-linecap="round"/><path d="M15 11l-6 3" stroke="#3a9bdc" stroke-width="4" stroke-linecap="round"/><text x="3" y="22" font-size="6" fill="#e8315b">YO</text><rect x="12" y="15" width="12" height="9" rx="2" fill="#bfe6f7"/><path d="M16 17v5M20 17v5" stroke="#2a7ba0" stroke-width="2"/></svg></button>
    <button type="button" class="current" aria-label="3ds Max"><svg class="s24" viewBox="0 0 24 24"><path d="M0 0h24v24H0z" fill="#dfeef0"/><path d="M8 5q5-3 7 0 1 4-4 5 6 0 5 5-2 4-8 2" fill="none" stroke="#118a88" stroke-width="3"/><text x="13" y="23" font-size="5" fill="#118a88">MAX</text></svg></button>
  </footer>

  <div class="badge">
    <svg width="132" height="106" viewBox="0 0 132 106">
      <path d="M11 46Q36 0 82 3q56 6 42 58 0-40-30-48Q48 8 11 46z" fill="#97bf28"/>
      <path d="M66 18l31 26v38l-31 2z" fill="#d6d9de"/><path d="M100 38l18 12-20 33z" fill="#d6d9de"/>
      <path d="M12 66l20-12v30q-12-6-20-18zM41 30l24-13v68h-24zM78 42l20-10v46q-8 6-20 8z" fill="#1d4b9c"/>
      <path d="M44 40l18-10v54H44z" fill="#4778b8"/>
      <path d="M5 50q8 46 52 40 52-4 72-44-16 54-76 59Q-8 102 5 50z" fill="#12409a"/>
    </svg>
    <div class="badge-text"><b>土木工程网</b><em>www.civilcn.com</em></div>
  </div>

  <script src="script.js"></script>
</body>
</html>
```
FILE: styles.css
```css
* {
  box-sizing: border-box;
}

body {
  margin: 0;
  padding-bottom: 2px;
  min-height: 100vh;
  display: flex;
  flex-direction: column;
  position: relative;
  background: #fff;
  color: #e4e4e4;
  font-family: "Noto Sans", "Noto Sans CJK SC", sans-serif;
  font-size: 12px;
  line-height: 16px;
}

button, input, select {
  font: inherit;
  color: inherit;
  margin: 0;
  padding: 0;
  border: 0;
  border-radius: 0;
  background: none;
}

button {
  display: flex;
  align-items: center;
  justify-content: center;
  flex: none;
}

a {
  color: inherit;
  text-decoration: none;
}

p, h1, h2 {
  margin: 0;
  font-size: 12px;
  font-weight: normal;
}

select {
  appearance: none;
  width: 100%;
}

svg {
  display: block;
  flex: none;
  fill: #dcdcdc;
}

.s16 { width: 16px; height: 16px; }
.s18 { width: 18px; height: 18px; }
.s20 { width: 20px; height: 20px; }
.s24 { width: 24px; height: 24px; }

.down {
  width: 0;
  height: 0;
  flex: none;
  border: 3px solid transparent;
  border-top: 4px solid #333;
  border-bottom: 0;
}

.up {
  border: 4px solid transparent;
  border-bottom: 6px solid #fff;
  border-top: 0;
  align-self: center;
  margin-right: 1px;
}

.right {
  width: 0;
  height: 0;
  border: 4px solid transparent;
  border-left-color: #333;
  border-right: 0;
}

.blue {
  background: #5d8ac7;
}

/* title bar + menu */
.top {
  display: flex;
  height: 45px;
}

.logo {
  width: 41px;
  height: 41px;
  flex-direction: column;
  justify-content: flex-start;
  overflow: hidden;
  border: 1px solid #111;
  background: linear-gradient(#d8d8d8, #8c8c8c);
  color: #111;
  box-shadow: 0 4px #666;
}

.logo svg {
  height: 29px;
}

.logo b {
  font-size: 8px;
  line-height: 10px;
}

.top-rows {
  flex: 1;
}

.titlebar {
  display: flex;
  height: 24px;
  background: #fff;
  color: #111;
}

.quick {
  display: flex;
  align-items: center;
  gap: 6px;
  width: 319px;
  padding-left: 8px;
  background: linear-gradient(#adadad, #858585);
}

.title {
  flex: 1;
  text-align: center;
  line-height: 24px;
}

.title span {
  margin-left: 18px;
}

.info {
  display: flex;
  align-items: center;
  gap: 5px;
  width: 459px;
  padding: 0 6px 0 4px;
  background: linear-gradient(#adadad, #858585);
}

.info input {
  width: 180px;
  height: 22px;
  padding-left: 4px;
  border: 1px solid #111;
  background: #fff;
}

.info input::placeholder {
  color: #555;
  font-style: italic;
}

.login {
  gap: 4px;
}

.push {
  margin-left: auto;
}

.bar {
  width: 1px;
  height: 20px;
  margin: 0 4px;
  background: #777;
}

.win {
  display: flex;
  width: 164px;
  padding: 0 2px 0 24px;
}

.win button {
  flex: 1;
}

.win svg {
  fill: none;
  stroke: #111;
}

.menubar {
  display: flex;
  gap: 25px;
  height: 21px;
  padding-left: 14px;
  line-height: 20px;
  background: linear-gradient(#a2a2a2, #636363);
  border-top: 1px solid #333;
  color: #fff;
}

.menubar a:nth-last-child(-n+5) {
  margin-left: -3px;
}

/* drop-downs */
.pick {
  position: relative;
  flex: none;
  height: 20px;
  margin: 0 1px;
  background: #666;
}

.pick::after {
  content: "";
  position: absolute;
  right: 6px;
  top: 8px;
  border: 3px solid transparent;
  border-top: 5px solid #ddd;
  border-bottom: 0;
}

.pick select {
  height: 100%;
  padding-left: 6px;
  display: block;
}

.pick-light {
  width: 130px;
  margin-left: -2px;
  border: 1px solid #666;
  background: linear-gradient(90deg, #f0f0f0, #ccc);
}

.pick-light select {
  padding-left: 4px;
}

.pick-light::after {
  border-top-color: #444;
}

.pick-s { width: 68px; }
.pick-l { width: 118px; }

.pick-s, .pick-l {
  align-self: flex-start;
  margin-top: 4px;
}

.pick-s select, .pick-cmd select {
  font-size: 11px;
}

.pick-l select {
  padding-left: 2px;
}

.pick-cmd {
  display: block;
  width: 190px;
}

/* main toolbar */
.toolbar {
  height: 39px;
  background: #444;
  border-bottom: 1px solid #1c1c1c;
}

.tools {
  display: inline-flex;
  align-items: center;
  height: 38px;
  padding-right: 2px;
  border-right: 1px solid #111;
}

.grip {
  width: 4px;
  height: 32px;
  margin: 0 2px;
  border: 1px solid #222;
  border-width: 0 1px;
  flex: none;
}

.tools button {
  position: relative;
  width: 32px;
  height: 32px;
}

.tools button svg {
  width: 23px;
  height: 23px;
}

.tools .on {
  width: 30px;
  height: 30px;
  margin: 0 1px;
  border: 2px solid #4b83cc;
  border-radius: 3px;
  background: #47648c;
}

.fly::after {
  content: "";
  position: absolute;
  right: 1px;
  bottom: 1px;
  border-left: 5px solid transparent;
  border-bottom: 5px solid #eee;
}

.sep {
  width: 2px;
  height: 16px;
  margin: 0 2px;
  background: #222;
}

.line, .wl { fill: none; stroke: #dcdcdc; stroke-width: 2; }
.t { fill: #45c0b5; }
.tl { fill: none; stroke: #45c0b5; stroke-width: 2; }
.o { fill: #f5a32e; }
.ol { fill: none; stroke: #f0a830; stroke-width: 2; }
.dash { stroke-dasharray: 4 2; }
.mid { stroke-width: 3; }
.thick { stroke-width: 4; }

/* ribbon */
.ribbon {
  display: flex;
  align-items: center;
  height: 40px;
  background: #444;
  border-top: 1px solid #666;
}

.ribbon-rows {
  flex: 1;
}

.tabs {
  display: flex;
  align-items: center;
  gap: 4px;
  height: 20px;
  padding-left: 7px;
  background: #525252;
  border-bottom: 1px solid #2c2c2c;
  color: #b4b4b4;
}

.tab {
  height: 19px;
  padding: 2px 24px 0;
}

.tight {
  padding-right: 8px;
}

.active {
  color: #fff;
}

.tab.active {
  background: linear-gradient(#6b6b6b, #777);
  border: 1px solid #333;
  border-bottom: 0;
}

.mini {
  width: 14px;
  height: 8px;
  margin: 0 4px 0 18px;
  border-radius: 2px;
  background: #eee;
}

.tabs > .down {
  border-top-color: #bbb;
}

.panels {
  display: flex;
  height: 20px;
  padding-left: 3px;
  background: linear-gradient(#3c3c3c, #474747);
}

.panels button {
  padding: 0 5px;
  border-right: 1px solid #5c5c5c;
}

/* workspace */
.work {
  flex: 1;
  display: flex;
  background: #444;
}

.strip {
  width: 40px;
  display: flex;
  flex-direction: column;
  align-items: center;
  gap: 11px;
  padding-bottom: 2px;
  background: #323232;
  border-right: 2px solid #262626;
}

.strip-grip {
  align-self: stretch;
  height: 10px;
  background: #444;
  border-bottom: 2px solid #222;
  margin-bottom: auto;
}

.play {
  width: 19px;
  height: 19px;
  background: #555;
  border-radius: 2px;
  font-size: 10px;
}

.layout {
  width: 36px;
  height: 44px;
  display: grid;
  grid-template-columns: 14px 14px;
  grid-template-rows: 14px 14px;
  gap: 1px;
  align-content: center;
  align-items: stretch;
  background: linear-gradient(#4f6a94, #3f7cca);
  border-radius: 3px;
}

.layout i {
  background: #57667c;
  border: 1px solid #2d3540;
}

/* explorer */
.explorer {
  width: 261px;
  display: flex;
  flex-direction: column;
  border: 1px solid #1a1a1a;
  border-width: 0 1px 2px 0;
}

.ex-menu {
  display: flex;
  gap: 20px;
  margin: 4px 2px 0;
  padding: 7px 0 5px 15px;
  border-top: 2px solid #222;
}

.ex-search {
  display: flex;
  align-items: center;
  height: 24px;
  padding-left: 6px;
}

.ex-search input {
  width: 150px;
  height: 23px;
  border: 1px solid #666;
}

.clear {
  width: 25px;
  color: #aaa;
}

.ex-search .blue, .ex-foot .blue {
  width: 24px;
  height: 24px;
}

.lock {
  width: 38px;
}

.more {
  align-self: flex-start;
  font-size: 14px;
  line-height: 10px;
  color: #5c5c84;
}

.ex-body {
  flex: 1;
  display: flex;
}

.ex-icons {
  display: flex;
  flex-direction: column;
  gap: 3px;
  width: 26px;
  padding: 5px 2px;
}

.ex-icons button {
  height: 20px;
}

.ex-icons hr {
  width: 18px;
  margin: 2px auto 0;
  border: 0;
  border-top: 1px solid #888;
}

.ex-list {
  flex: 1;
  margin: 3px 5px 3px 1px;
  border: 1px solid #555;
}

.ex-head {
  display: flex;
  justify-content: space-between;
  padding: 1px 0 2px 2px;
  border-bottom: 1px solid #5c5c5c;
}

.ex-row {
  display: flex;
  height: 18px;
  padding-left: 18px;
  line-height: 18px;
}

.ex-row span {
  flex: 1;
  margin-left: -4px;
  padding-left: 3px;
  background: #5f5f5f;
}

.ex-row.sel span {
  background: #828282;
}

.ex-foot {
  display: flex;
  align-items: center;
  gap: 6px;
  height: 30px;
  padding-left: 6px;
  border-top: 1px solid #555;
}

.ex-foot select {
  width: 145px;
  height: 24px;
  padding-left: 1px;
  border: 1px solid #666;
  color: #ecec1c;
}

.ex-foot button {
  width: 24px;
  margin-left: 2px;
}

.ex-foot .blue {
  margin-left: -6px;
}

.ex-foot .more {
  margin-left: 18px;
  margin-top: 4px;
}

/* viewports */
.center {
  flex: 1;
  min-width: 0;
  display: flex;
  flex-direction: column;
  padding: 2px 0 0 2px;
}

.views {
  flex: 1;
  display: grid;
  grid-template-columns: 1fr 1fr;
  grid-template-rows: 1fr 1fr;
  gap: 6px;
}

.view {
  position: relative;
  overflow: hidden;
  background: #383838;
}

.view p {
  position: absolute;
  left: 5px;
  top: 8px;
  font-size: 12px;
  color: #c8c8c8;
}

.view p span {
  margin-right: 2px;
}

.scene {
  position: absolute;
  width: 100%;
  height: 100%;
}

.persp {
  background: linear-gradient(#1b1b1b, #4c4c4c);
}

.persp::after {
  content: "";
  position: absolute;
  inset: 0;
  border: 2px solid #7d6a2c;
}

.grid { fill: none; stroke: #606060; }
.axis { stroke: #000; }
.wire { fill: none; stroke: #f4f4f4; }
.yellow { fill: none; stroke: #fbe750; stroke-width: 2; }

.ax {
  font-size: 11px;
  fill: #777;
}

.ax.r { fill: #b01c24; }
.ax.g { fill: #0a8a2a; }
.ax.b { fill: #2222c8; }

.cube {
  fill: #868686;
}

.cube text {
  fill: #a2a4a6;
  font-size: 10px;
  text-anchor: middle;
}

.cube .face {
  font-size: 16px;
  fill: #6a6f74;
}

.persp .cube text {
  fill: #5c5f62;
}

/* time slider */
.slider {
  display: flex;
  gap: 2px;
  height: 18px;
  margin-top: 2px;
}

.slider button {
  width: 14px;
  height: 17px;
  border-radius: 2px;
  background: #5c5c5c;
}

.slider .frame {
  width: 123px;
  background: #666;
}

.track {
  display: flex;
  height: 26px;
}

.track button {
  width: 48px;
  padding-right: 8px;
}

.ruler {
  flex: 1;
  display: flex;
  margin-right: 49px;
  background: #2a2a2a;
  border-top: 1px solid #111;
}

.tick {
  flex: 1;
  min-width: 0;
  display: flex;
  flex-direction: column;
  align-items: center;
  line-height: 14px;
  color: #bbb;
}

.tick i {
  width: 1px;
  height: 12px;
  flex: none;
  background: #777;
}

.tick.now {
  color: #e8e84a;
  background: linear-gradient(#7d7a20, #7d7a20) center / 8px 24px no-repeat;
}

/* command panel */
.command {
  width: 205px;
  padding: 3px 4px 0 10px;
  display: flex;
  flex-direction: column;
  overflow: hidden;
}

.cmd-tabs {
  display: flex;
  height: 25px;
  gap: 1px;
  margin: 0 3px 0 -4px;
}

.cmd-tabs button {
  flex: 1;
  background: #393939;
}

.cmd-tabs .active {
  background: #444;
}

.cats {
  display: flex;
  gap: 2px;
  margin: 5px 0 7px 1px;
}

.cats button {
  width: 22px;
  height: 22px;
}

.cats .on {
  background: #4b83cc;
  border-radius: 3px;
}

.scroll {
  display: flex;
  gap: 4px;
  margin-top: 6px;
}

.rolls {
  width: 182px;
  font-size: 11px;
  display: grid;
  gap: 4px;
}

.bar-v {
  width: 5px;
  height: 616px;
  background: #555;
  border: 1px solid #383838;
}

.roll {
  height: 167px;
  padding: 0 10px 0 11px;
  background: #515151;
  border-radius: 3px;
}

.roll h2 {
  display: flex;
  line-height: 19px;
  font-weight: bold;
  color: #fff;
}

.roll h2::before {
  content: "▼";
  width: 12px;
  margin-left: -4px;
  font-size: 6px;
  font-weight: normal;
}

.roll h2::after {
  content: "⠿";
  margin-right: -4px;
  margin-left: auto;
  font-size: 9px;
  color: #888;
}

.roll label {
  display: flex;
  align-items: center;
  white-space: nowrap;
}

.autogrid {
  margin-left: 34px;
  height: 20px;
  color: #858585;
}

.types {
  display: grid;
  grid-template-columns: 78px 78px;
  gap: 4px;
}

.types button {
  height: 17px;
  border: 1px solid #444;
  border-radius: 2px;
  background: #616161;
}

.types button:disabled {
  background: #575757;
  color: #848484;
}

.roll:nth-child(2) {
  height: 55px;
}

.namecolor {
  display: flex;
  gap: 4px;
  margin: 6px 0 0 6px;
}

.namecolor input {
  width: 131px;
  height: 20px;
  padding-left: 1px;
  background: #5d5d5d;
  font-size: 12px;
}

.swatch {
  width: 17px;
  height: 20px;
  border: 1px solid #111;
  background: #5ae0c3;
}

.pickroll {
  height: 153px;
}

.start {
  width: 114px;
  height: 18px;
  margin: 3px 0 7px 21px;
  border-radius: 2px;
  background: #5d8ac7;
}

.modes {
  display: grid;
  grid-template-columns: 81px 1fr;
  grid-auto-rows: 18px;
  margin: 0 0 5px 12px;
}

input[type="radio"], input[type="checkbox"] {
  appearance: none;
  width: 10px;
  height: 10px;
  flex: none;
  margin-right: 8px;
  border-radius: 50%;
  background: #626262;
}

input[type="radio"]:checked {
  background: #e6e6e6;
  border: 2px solid #626262;
}

input[type="checkbox"] {
  margin-right: 4px;
  border-radius: 0;
  border: 1px solid #484848;
}

.credit {
  height: 46px;
  margin-left: 1px;
  width: 159px;
  padding-top: 5px;
  border: 1px solid #383838;
  text-align: center;
  line-height: 13px;
  overflow: hidden;
}

.params {
  height: auto;
}

fieldset {
  position: relative;
  width: 153px;
  min-width: 0;
  margin: 0 0 1px 2px;
  padding: 0 4px;
  border: 1px solid #383838;
}

legend {
  padding: 0 1px;
  line-height: 14px;
}

.ops {
  display: flex;
  padding: 0 0 0 9px;
  height: 132px;
  margin-bottom: 0;
}

.ops legend {
  margin-left: -5px;
}

.ops label {
  height: 19px;
}

.checks {
  position: absolute;
  left: 94px;
  top: 2px;
}

.show {
  display: flex;
  height: 38px;
  padding: 0 0 0 15px;
}

.show legend {
  margin-left: -11px;
}

.show label {
  height: 18px;
  margin-right: 18px;
}

.show label + label {
  margin-right: 0;
}

.mat label {
  height: 19px;
}

/* status bar */
.status {
  display: flex;
  height: 50px;
  background: #444;
}

.listener {
  width: 99px;
  margin: 2px 0;
  padding: 1px 2px;
  background: #fff;
  color: #111;
  display: flex;
  flex-direction: column;
  gap: 2px;
}

.listener span {
  height: 21px;
  background: #dcc4c6;
  border-top: 1px solid #666;
}

.listener input {
  width: 95px;
  height: 22px;
  padding-left: 4px;
  font-family: "Liberation Mono", "Noto Sans CJK SC", monospace;
  border: 1px solid #777;
}

.msg {
  flex: 1;
  margin-left: 5px;
  padding: 7px 0 0 4px;
  border-left: 1px solid #111;
}

.msg p {
  margin-bottom: 9px;
  font-size: 11px;
}

.coords {
  width: 891px;
}

.xyz {
  display: flex;
  align-items: center;
  gap: 11px;
  height: 29px;
}

.xyz label {
  display: flex;
  align-items: center;
  width: 72px;
}

.xyz label:first-of-type {
  margin-left: -4px;
}

.xyz input {
  width: 58px;
  height: 18px;
  margin-left: auto;
  background: #5c5c5c;
}

.gridsize {
  margin-left: 5px;
}

.tag {
  display: flex;
  align-items: center;
  gap: 8px;
  margin: 3px 0 0 303px;
  padding-left: 3px;
  border-left: 1px solid #111;
  font-size: 11px;
}

/* taskbar */
.taskbar {
  display: flex;
  height: 40px;
  background: linear-gradient(90deg, #2e3322, #2d2e22 60%, #3a3a25);
}

.taskbar button {
  width: 49px;
}

.taskbar .start-btn {
  width: 48px;
  background: #1f2a2a;
}

.search {
  display: flex;
  align-items: center;
  gap: 10px;
  width: 344px;
  padding-left: 12px;
  background: #f2f2f2;
  color: #222;
}

.search input {
  flex: 1;
  font-size: 14px;
}

.search input::placeholder {
  color: #333;
}

.taskbar .run {
  background: linear-gradient(#76b9ed, #76b9ed) center bottom / 40px 2px no-repeat;
}

.taskbar .current {
  background: #5c5e4e;
  border-bottom: 2px solid #76b9ed;
}

/* site badge over the lower right corner */
.badge {
  position: absolute;
  right: 0;
  bottom: 0;
  width: 485px;
  height: 242px;
  display: flex;
  align-items: center;
  padding: 0 0 2px 42px;
  background: #fff;
  color: #111;
}

.badge-text {
  display: flex;
  flex-direction: column;
}

.badge b {
  font-size: 54px;
  line-height: 52px;
  font-weight: 900;
}

.badge em {
  font-family: "Open Sans", sans-serif;
  font-size: 35px;
  line-height: 38px;
  font-weight: 600;
}
```
FILE: script.js
```js
// grid lines run outwards from the world axes of each viewport
document.querySelectorAll('.grid').forEach(function (g) {
  var step = parseFloat(g.dataset.step);
  var x0 = parseFloat(g.dataset.x);
  var y0 = parseFloat(g.dataset.y);
  var d = '';
  for (var x = x0 % step; x < 703; x += step) {
    d += 'M' + (Math.round(x) + 0.5) + ' 0V406';
  }
  for (var y = y0 % step; y < 406; y += step) {
    d += 'M0 ' + (Math.round(y) + 0.5) + 'H703';
  }
  g.setAttribute('d', d);
});

// frames 0 - 100 on the track bar, the badge covers it past lastLabel
var ruler = document.getElementById('ruler');
var lastLabel = 80;
for (var i = 0; i <= 100; i++) {
  var tick = document.createElement('div');
  tick.className = i === 0 ? 'tick now' : 'tick';
  tick.appendChild(document.createElement('i'));
  if (i % 5 === 0 && i <= lastLabel) {
    var label = document.createElement('span');
    label.textContent = i;
    tick.appendChild(label);
  }
  ruler.appendChild(tick);
}
```
